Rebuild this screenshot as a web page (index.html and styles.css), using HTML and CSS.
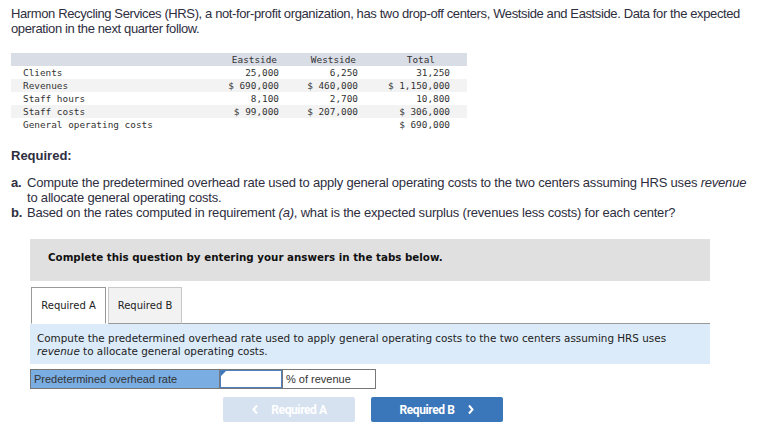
FILE: index.html
```html
<!DOCTYPE html>
<html lang="en">
<head>
    <meta charset="UTF-8">
    <title>Harmon Recycling Services</title>
    <link rel="stylesheet" href="styles.css">
</head>
<body>
<div class="pagina">
    <p class="intro">Harmon Recycling Services (HRS), a not-for-profit organization, has two drop-off centers, Westside and Eastside. Data for the expected operation in the next quarter follow.</p>

    <table class="datos">
        <colgroup>
            <col class="c-label">
            <col class="c-east">
            <col class="c-west">
            <col class="c-total">
        </colgroup>
        <tr class="cabecera">
            <th></th>
            <th>Eastside</th>
            <th>Westside</th>
            <th class="th-total">Total</th>
        </tr>
        <tr><td>Clients</td><td>25,000</td><td>6,250</td><td>31,250</td></tr>
        <tr class="par"><td>Revenues</td><td>$ 690,000</td><td>$ 460,000</td><td>$ 1,150,000</td></tr>
        <tr><td>Staff hours</td><td>8,100</td><td>2,700</td><td>10,800</td></tr>
        <tr class="par"><td>Staff costs</td><td>$ 99,000</td><td>$ 207,000</td><td>$ 306,000</td></tr>
        <tr><td>General operating costs</td><td></td><td></td><td>$ 690,000</td></tr>
    </table>

    <h4 class="requerido">Required:</h4>
    <ol class="lista">
        <li><b>a.</b>Compute the predetermined overhead rate used to apply general operating costs to the two centers assuming HRS uses <i>revenue</i> to allocate general operating costs.</li>
        <li><b>b.</b>Based on the rates computed in requirement <i>(a)</i>, what is the expected surplus (revenues less costs) for each center?</li>
    </ol>

    <div class="pregunta">
        <div class="aviso">Complete this question by entering your answers in the tabs below.</div>

        <div class="pestanas">
            <div class="pestana activa">Required A</div>
            <div class="pestana">Required B</div>
            <div class="linea"></div>
        </div>

        <div class="panel">Compute the predetermined overhead rate used to apply general operating costs to the two centers assuming HRS uses <i>revenue</i> to allocate general operating costs.</div>

        <div class="fila-respuesta">
            <div class="etiqueta">Predetermined overhead rate</div>
            <div class="celda-input"><input type="text" aria-label="rate"></div>
            <div class="unidad">% of revenue</div>
        </div>

        <div class="botones">
            <button class="boton deshabilitado">
                <svg width="8" height="11" viewBox="0 0 8 11"><path d="M6 1.5 L2.5 5.5 L6 9.5" fill="none" stroke="#fff" stroke-width="2"/></svg>
                Required A
            </button>
            <button class="boton primario">
                Required B
                <svg width="8" height="11" viewBox="0 0 8 11"><path d="M2 1.5 L5.5 5.5 L2 9.5" fill="none" stroke="#fff" stroke-width="2"/></svg>
            </button>
        </div>
    </div>
</div>
</body>
</html>
```

FILE: styles.css
```css
body {
    margin: 0;
    background: #fff;
    font-family: "Liberation Sans", Arial, sans-serif;
    color: #2e2e40;
}
.pagina {
    padding: 6px 11px 0 11px;
}
.intro {
    margin: 0;
    font-size: 13px;
    line-height: 15px;
    letter-spacing: -0.38px;
    width: 762px;
}
.datos {
    margin-top: 17px;
    border-collapse: collapse;
    font-family: "DejaVu Sans Mono", "Liberation Mono", monospace;
    font-size: 9.4px;
    color: #333;
}
.datos td, .datos th {
    height: 13px;
    padding: 0 0 0 0;
    line-height: 13px;
    white-space: nowrap;
    text-align: right;
    font-weight: normal;
}
.c-label { width: 189px; }
.c-east { width: 80px; }
.c-west { width: 79px; }
.c-total { width: 108px; }
.datos td:first-child {
    text-align: left;
    padding-left: 12px;
}
.datos th { padding-right: 3px; }
.datos td { padding-right: 1px; }
.datos td:last-child { padding-right: 17px; }
.datos th.th-total { padding-right: 32px; }
.cabecera { background: #d9dde6; }
.par { background: #f3f3f3; }
.requerido {
    margin: 17px 0 0 0;
    font-size: 13px;
    line-height: 15px;
    font-weight: bold;
}
.lista {
    list-style: none;
    margin: 12px 0 0 0;
    padding: 0 0 0 16px;
    font-size: 13px;
    line-height: 15px;
    letter-spacing: -0.2px;
    width: 730px;
}
.lista li {
    text-indent: -16px;
}
.lista b {
    display: inline-block;
    width: 16px;
    text-indent: 0;
}
.pregunta {
    margin: 19px 0 0 19px;
    width: 680px;
    font-family: "DejaVu Sans", Verdana, sans-serif;
}
.aviso {
    background: #e0e0e0;
    height: 42px;
    box-sizing: border-box;
    padding: 12px 0 0 18px;
    font-size: 10.3px;
    line-height: 13px;
    font-weight: bold;
    color: #111;
}
.pestanas {
    display: flex;
    align-items: flex-end;
    margin-top: 6px;
    height: 37px;
}
.pestana {
    box-sizing: border-box;
    width: 74px;
    height: 37px;
    display: flex;
    align-items: center;
    justify-content: center;
    font-size: 10px;
    color: #222;
    background: #f2f2f2;
    border: 1px solid #c8c8c8;
    border-bottom: 1px solid #999;
    margin-left: 2px;
}
.pestana.activa {
    margin-left: 1px;
    background: #fff;
    border: 1px solid #999;
    border-bottom: 1px solid #fff;
    width: 75px;
}
.linea {
    flex: 1;
    border-bottom: 1px solid #999;
}
.panel {
    background: #dcebf9;
    padding: 8px 7px 6px 7px;
    font-size: 10.4px;
    line-height: 13px;
    color: #222;
}
.fila-respuesta {
    display: flex;
    margin-top: 5px;
    height: 20px;
    font-family: "Liberation Sans", Arial, sans-serif;
    font-size: 11px;
    color: #333;
}
.etiqueta {
    box-sizing: border-box;
    width: 190px;
    background: #7aade2;
    border: 1px solid #777;
    padding: 0 3px;
    line-height: 18px;
}
.celda-input {
    position: relative;
    box-sizing: border-box;
    width: 62px;
    border-top: 1px solid #777;
    border-bottom: 1px solid #777;
}
.celda-input input {
    box-sizing: border-box;
    width: 100%;
    height: 100%;
    margin: 0;
    border: 1px solid #4f7fbf;
    outline: none;
}
.celda-input::before {
    content: "";
    position: absolute;
    top: 1px;
    left: 1px;
    border-top: 5px solid #3a76ba;
    border-right: 5px solid transparent;
}
.unidad {
    box-sizing: border-box;
    width: 94px;
    border: 1px solid #777;
    padding: 0 3px;
    line-height: 18px;
    background: #fff;
}
.botones {
    display: flex;
    gap: 16px;
    margin: 8px 0 0 193px;
}
.boton {
    width: 132px;
    height: 25px;
    border: none;
    border-radius: 2px;
    color: #fff;
    font-family: Roboto, "Liberation Sans", sans-serif;
    font-weight: bold;
    font-size: 12px;
    letter-spacing: -0.4px;
    display: flex;
    align-items: center;
    justify-content: center;
    gap: 12px;
}
.deshabilitado { background: #d6e2f0; }
.primario { background: #3a76ba; }
```
